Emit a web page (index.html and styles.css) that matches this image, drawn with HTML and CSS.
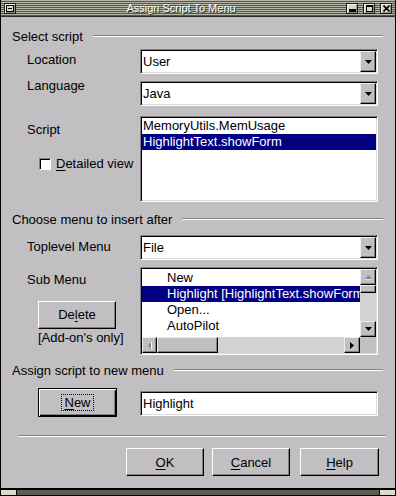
FILE: index.html
```html
<!DOCTYPE html>
<html lang="en">

<head>
    <meta charset="UTF-8">
    <title>Assign Script To Menu</title>
    <link rel="stylesheet" href="styles.css">
</head>

<body>
    <div class="window">
        <div class="titlebar">
            <span class="tbtn">
                <svg width="8" height="7" viewBox="0 0 8 7"><rect x="0.5" y="0.5" width="7" height="6" fill="none" stroke="#000"/><path d="M2 3.5h4" stroke="#000"/></svg>
            </span>
            <span class="title">Assign Script To Menu</span>
            <span class="tbtn tbtn-r">
                <svg width="7" height="7" viewBox="0 0 7 7"><rect x="0" y="4" width="7" height="3" fill="#000"/></svg>
            </span>
            <span class="tbtn tbtn-r">
                <svg width="7" height="7" viewBox="0 0 7 7"><rect x="0.5" y="0.5" width="6" height="6" fill="none" stroke="#000"/><rect x="0" y="0" width="7" height="2" fill="#000"/></svg>
            </span>
            <span class="tbtn tbtn-r">
                <svg width="7" height="7" viewBox="0 0 7 7"><path d="M0.5 0.5l6 6M6.5 0.5l-6 6" stroke="#000" stroke-width="1.6"/></svg>
            </span>
        </div>

        <div class="dialog">
            <!-- select script -->
            <div class="group-head head-1"><span>Select script</span><span class="rule"></span></div>

            <div class="row row-loc">
                <div class="lbl lbl-loc">Location</div>
                <div class="combo">
                    <span class="value">User</span>
                    <span class="drop"><svg width="7" height="4" viewBox="0 0 7 4"><path d="M0 0h7L3.5 4z" fill="#000"/></svg></span>
                </div>
            </div>

            <div class="row row-lang">
                <div class="lbl lbl-lang">Language</div>
                <div class="combo">
                    <span class="value">Java</span>
                    <span class="drop"><svg width="7" height="4" viewBox="0 0 7 4"><path d="M0 0h7L3.5 4z" fill="#000"/></svg></span>
                </div>
            </div>

            <div class="row row-script">
                <div class="lbl-col">
                    <div class="lbl lbl-script">Script</div>
                    <div class="check">
                        <span class="box"></span>
                        <span><u>D</u>etailed view</span>
                    </div>
                </div>
                <div class="list list-script">
                    <div class="item">MemoryUtils.MemUsage</div>
                    <div class="item selected">HighlightText.showForm</div>
                </div>
            </div>

            <!-- choose menu -->
            <div class="group-head head-2"><span>Choose menu to insert after</span><span class="rule"></span></div>

            <div class="row row-top">
                <div class="lbl lbl-top">Toplevel Menu</div>
                <div class="combo">
                    <span class="value">File</span>
                    <span class="drop"><svg width="7" height="4" viewBox="0 0 7 4"><path d="M0 0h7L3.5 4z" fill="#000"/></svg></span>
                </div>
            </div>

            <div class="row row-sub">
                <div class="lbl-col">
                    <div class="lbl lbl-sub">Sub Menu</div>
                    <div class="btn btn-delete">De<u>l</u>ete</div>
                    <div class="note">[Add-on's only]</div>
                </div>
                <div class="list list-sub">
                    <div class="items">
                        <div class="item">New</div>
                        <div class="item selected">Highlight [HighlightText.showForm]</div>
                        <div class="item">Open...</div>
                        <div class="item">AutoPilot</div>
                    </div>
                    <div class="vscroll">
                        <span class="sbtn"><svg width="7" height="5" viewBox="0 0 7 5"><path d="M0 4h7L3.5 0z" fill="#8a888a"/><path d="M0 5h7" stroke="#fff"/></svg></span>
                        <span class="thumb-v"></span>
                        <span class="track"></span>
                        <span class="sbtn"><svg width="7" height="4" viewBox="0 0 7 4"><path d="M0 0h7L3.5 4z" fill="#000"/></svg></span>
                    </div>
                    <div class="hscroll">
                        <span class="sbtn sbtn-left"><svg width="4" height="7" viewBox="0 0 4 7"><path d="M3 0v7L0 3.5z" fill="#8a888a"/><path d="M3.5 0v7" stroke="#fff"/></svg></span>
                        <span class="thumb-h"></span>
                        <span class="track"></span>
                        <span class="sbtn"><svg width="4" height="7" viewBox="0 0 4 7"><path d="M0 0v7L4 3.5z" fill="#000"/></svg></span>
                    </div>
                    <div class="corner"></div>
                </div>
            </div>

            <!-- new menu -->
            <div class="group-head head-3"><span>Assign script to new menu</span><span class="rule"></span></div>

            <div class="row row-new">
                <div class="lbl-col">
                    <div class="btn btn-default"><span class="focus"><u>N</u>ew</span></div>
                </div>
                <div class="field">Highlight</div>
            </div>

            <div class="separator"></div>

            <div class="actions">
                <div class="btn"><u>O</u>K</div>
                <div class="btn"><u>C</u>ancel</div>
                <div class="btn btn-help"><u>H</u>elp</div>
            </div>
        </div>

        <div class="frame-bottom">
            <span class="cap"></span>
            <span class="bar"></span>
            <span class="cap"></span>
        </div>
    </div>
</body>

</html>
```

FILE: styles.css
```css
* {
    box-sizing: border-box;
}

body {
    margin: 0;
    font-family: "Liberation Sans", Arial, sans-serif;
    font-size: 13px;
    line-height: 16px;
    color: #000;
    background: #c1bfc1;
}

u {
    text-decoration-thickness: 1px;
    text-underline-offset: 2px;
}

.window {
    width: 396px;
    height: 496px;
    display: flex;
    flex-direction: column;
    border-left: 1px solid #000;
    border-right: 1px solid #000;
    background: #c1bfc1;
}

/* title bar */
.titlebar {
    height: 17px;
    flex: none;
    display: flex;
    align-items: center;
    padding: 0 3px;
    border-bottom: 1px solid #2e2e28;
    background: repeating-linear-gradient(to bottom, #b6b6a8 0, #b6b6a8 1px, #56564c 1px, #56564c 2px);
}

.tbtn {
    width: 12px;
    height: 11px;
    display: flex;
    align-items: center;
    justify-content: center;
    background: #d8d6c8;
    border: 1px solid #1c1c18;
    box-shadow: inset 1px 1px #f4f4ec, inset -1px -1px #8c8c80;
}

.tbtn-r + .tbtn-r {
    margin-left: 5px;
}

.title {
    flex: 1;
    text-align: center;
    color: #fff;
    font-size: 11px;
    line-height: 14px;
    text-shadow: 1px 1px 0 #2e2e28;
}

/* dialog body */
.dialog {
    flex: 1;
    padding: 0 12px 0 11px;
}

.group-head {
    display: flex;
}

.group-head .rule {
    flex: 1;
    height: 2px;
    margin: 6px 0 0 10px;
    border-top: 1px solid #828082;
    border-bottom: 1px solid #fff;
}

.head-1 { margin-top: 12px; }
.head-2 { margin-top: 10px; }
.head-3 { margin-top: 8px; }

.row {
    display: grid;
    grid-template-columns: 113px 238px;
    align-items: start;
    padding-left: 15px;
}

.row-loc { margin-top: 4px; }
.row-lang { margin-top: 7px; }
.row-script { margin-top: 10px; }
.row-top { margin-top: 7px; }
.row-sub { margin-top: 7px; }
.row-new { margin-top: 9px; }

.lbl-loc { margin-top: 3px; }
.lbl-lang { margin-top: -3px; }
.lbl-script { margin-top: 6px; }
.lbl-top { margin-top: 4px; }
.lbl-sub { margin-top: 5px; }

/* sunken controls */
.combo,
.list,
.field {
    background: #fff;
    border: 1px solid;
    border-color: #828082 #fff #fff #828082;
    box-shadow: inset 1px 1px #000, inset -1px -1px #dcdadc;
    padding: 1px;
}

.combo {
    height: 25px;
    display: flex;
}

.combo .value {
    flex: 1;
    padding-left: 1px;
    align-self: center;
}

.drop {
    width: 16px;
    display: flex;
    align-items: center;
    justify-content: center;
    background: #c1bfc1;
    border: 1px solid;
    border-color: #eeeeee #000 #000 #eeeeee;
    box-shadow: inset -1px -1px #828082;
}

.list-script {
    height: 86px;
}

.item {
    height: 16px;
    padding-left: 1px;
    white-space: nowrap;
}

.item.selected {
    background: #000080;
    color: #fff;
}

.check {
    display: flex;
    align-items: center;
    gap: 5px;
    margin: 18px 0 0 12px;
}

.check .box {
    width: 12px;
    height: 12px;
    background: #fff;
    border: 1px solid;
    border-color: #828082 #fff #fff #828082;
    box-shadow: inset 1px 1px #000;
}

/* sub menu list with scrollbars */
.list-sub {
    height: 88px;
    display: grid;
    grid-template-columns: 218px 16px;
    grid-template-rows: 68px 16px;
}

.list-sub .items {
    overflow: hidden;
    padding-top: 1px;
}

.list-sub .item {
    padding-left: 25px;
}

.vscroll {
    display: flex;
    flex-direction: column;
    background: #d3d1d3;
}

.hscroll {
    display: flex;
    background: #d3d1d3;
}

.track {
    flex: 1;
}

.sbtn {
    width: 16px;
    height: 16px;
    flex: none;
    display: flex;
    align-items: center;
    justify-content: center;
    background: #c1bfc1;
    border: 1px solid;
    border-color: #eeeeee #000 #000 #eeeeee;
    box-shadow: inset -1px -1px #828082;
}

.sbtn-left {
    width: 15px;
}

.thumb-v,
.thumb-h {
    flex: none;
    background: #c1bfc1;
    border: 1px solid;
    border-color: #eeeeee #000 #000 #eeeeee;
    box-shadow: inset -1px -1px #828082;
}

.thumb-v {
    height: 8px;
}

.thumb-h {
    width: 61px;
}

.corner {
    background: #c1bfc1;
}

/* buttons */
.btn {
    width: 78px;
    height: 28px;
    display: flex;
    align-items: center;
    justify-content: center;
    background: #c1bfc1;
    border: 1px solid;
    border-color: #fff #000 #000 #fff;
    box-shadow: inset -1px -1px #828082;
}

.btn-delete {
    margin: 13px 0 0 11px;
}

.note {
    margin: 1px 0 0 11px;
    white-space: nowrap;
}

.btn-default {
    width: 79px;
    height: 29px;
    margin-left: 11px;
    border: 1px solid #000;
    box-shadow: inset 1px 1px #fff, inset -1px -1px #000, inset -2px -2px #828082;
}

.focus {
    border: 1px dotted #000;
    padding: 0 2px;
    line-height: 15px;
}

.field {
    height: 25px;
    margin-top: 3px;
    padding-left: 2px;
    display: flex;
    align-items: center;
}

.separator {
    height: 2px;
    margin: 18px -3px 0 6px;
    border-top: 1px solid #828082;
    border-bottom: 1px solid #fff;
}

.actions {
    display: flex;
    justify-content: flex-end;
    gap: 8px;
    margin: 11px 4px 0 0;
}

.actions .btn {
    padding-top: 2px;
}

.actions .btn-help {
    width: 79px;
    margin-left: 2px;
}

/* bottom frame */
.frame-bottom {
    height: 8px;
    flex: none;
    display: flex;
    border-top: 2px solid #000;
    border-bottom: 1px solid #000;
}

.frame-bottom .cap {
    width: 15px;
    background: #dcdccc;
}

.frame-bottom .bar {
    flex: 1;
    background: #5c5c54;
    border-left: 1px solid #000;
    border-right: 1px solid #000;
}
```
